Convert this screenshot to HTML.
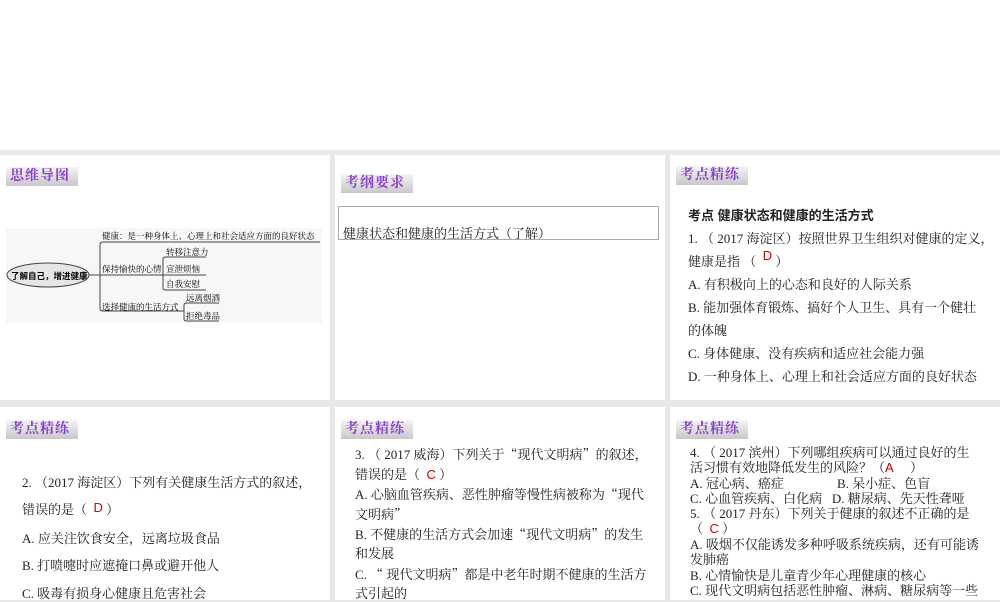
<!DOCTYPE html>
<html><head><meta charset="utf-8"><style>
*{margin:0;padding:0;box-sizing:border-box}
body{width:1000px;height:600px;background:#e8e8e8;position:relative;overflow:hidden;font-family:"Liberation Serif","Noto Serif CJK SC",serif;color:#222}
.top{position:absolute;left:0;top:0;width:1000px;height:150px;background:#fff}
.p{position:absolute;background:#fff}
.h{position:absolute;width:72px;height:19px;background:linear-gradient(#f4f4f4,#c8c8c8);color:#8a3fd0;font-weight:bold;font-size:14px;line-height:19px;padding-left:4px;letter-spacing:1px;font-family:"Liberation Serif","Noto Serif CJK SC",serif}
.t{position:absolute;font-size:13px;white-space:nowrap}
.q{font-family:"Noto Serif CJK SC",serif}
.r{color:#d00000;font-family:"Liberation Sans",sans-serif}
</style></head><body>
<div class="top"></div>
<div class="p" style="left:0;top:155px;width:330px;height:245px"></div>
<div class="p" style="left:335px;top:155px;width:330px;height:245px"></div>
<div class="p" style="left:670px;top:155px;width:330px;height:245px"></div>
<div class="p" style="left:0;top:407px;width:330px;height:193px"></div>
<div class="p" style="left:335px;top:407px;width:330px;height:193px"></div>
<div class="p" style="left:670px;top:407px;width:330px;height:193px"></div>

<div class="h" style="left:6px;top:167px">思维导图</div>
<div class="h" style="left:341px;top:174px">考纲要求</div>
<div class="h" style="left:676px;top:166px">考点精练</div>
<div class="h" style="left:6px;top:420px">考点精练</div>
<div class="h" style="left:341px;top:420px">考点精练</div>
<div class="h" style="left:676px;top:420px">考点精练</div>

<svg style="position:absolute;left:6px;top:228px" width="316" height="95" font-family="Liberation Serif,Noto Serif CJK SC,serif" font-size="8.5">
<rect width="316" height="95" fill="#f7f7f7"/>
<ellipse cx="42" cy="47" rx="41" ry="12" fill="#e6e6e6" stroke="#444"/>
<text x="5" y="51" font-size="8.5" font-weight="bold" font-family="Liberation Sans,Noto Sans CJK SC,sans-serif">了解自己，增进健康</text>
<path d="M83 47H94M94 47V17Q94 14 97 14H314M94 47H160M94 47V81Q94 83 97 83H178" stroke="#444" fill="none"/>
<text x="96" y="11">健康：是一种身体上、心理上和社会适应方面的良好状态</text>
<text x="96" y="44">保持愉快的心情</text>
<path d="M157 47V31Q157 29 160 29H200M157 47H200M157 47V60Q157 62 160 62H200" stroke="#444" fill="none"/>
<text x="160" y="27">转移注意力</text>
<text x="160" y="44">宣泄烦恼</text>
<text x="160" y="59">自我安慰</text>
<text x="96" y="82">选择健康的生活方式</text>
<path d="M178 83V77Q178 75 181 75H213M178 83V91Q178 93 181 93H213" stroke="#444" fill="none"/>
<text x="180" y="73">远离烟酒</text>
<text x="180" y="91">拒绝毒品</text>
</svg>

<div style="position:absolute;left:338px;top:206px;width:321px;height:34px;border:1px solid #aaa"></div>
<div class="t" style="left:343px;top:223px">健康状态和健康的生活方式（了解）</div>

<div class="t" style="left:688px;top:205px;font-weight:bold;font-family:'Liberation Sans','Noto Sans CJK SC',sans-serif">考点 健康状态和健康的生活方式</div>
<div class="t" style="left:688px;top:228px">1. （ 2017 海淀区）按照世界卫生组织对健康的定义，</div>
<div class="t" style="left:688px;top:251px">健康是指 （ &nbsp;<span class="r" style="position:relative;top:-6px">D</span> ）</div>
<div class="t" style="left:688px;top:274px">A. 有积极向上的心态和良好的人际关系</div>
<div class="t" style="left:688px;top:297px">B. 能加强体育锻炼、搞好个人卫生、具有一个健壮</div>
<div class="t" style="left:688px;top:320px">的体魄</div>
<div class="t" style="left:688px;top:343px">C. 身体健康、没有疾病和适应社会能力强</div>
<div class="t" style="left:688px;top:366px">D. 一种身体上、心理上和社会适应方面的良好状态</div>

<div class="t" style="left:22px;top:472px">2. （2017 海淀区）下列有关健康生活方式的叙述，</div>
<div class="t" style="left:22px;top:499px">错误的是（ &nbsp;<span class="r" style="position:relative;top:-2px">D</span> ）</div>
<div class="t" style="left:22px;top:528px">A. 应关注饮食安全，远离垃圾食品</div>
<div class="t" style="left:22px;top:555px">B. 打喷嚏时应遮掩口鼻或避开他人</div>
<div class="t" style="left:22px;top:583px">C. 吸毒有损身心健康且危害社会</div>

<div class="t" style="left:355px;top:444px">3. （ 2017 威海）下列关于<span class="q">“</span>现代文明病<span class="q">”</span>的叙述，</div>
<div class="t" style="left:355px;top:464px">错误的是（ &nbsp;<span class="r">C</span> ）</div>
<div class="t" style="left:355px;top:484px">A. 心脑血管疾病、恶性肿瘤等慢性病被称为<span class="q">“</span>现代</div>
<div class="t" style="left:355px;top:504px">文明病<span class="q">”</span></div>
<div class="t" style="left:355px;top:524px">B. 不健康的生活方式会加速<span class="q">“</span>现代文明病<span class="q">”</span>的发生</div>
<div class="t" style="left:355px;top:543px">和发展</div>
<div class="t" style="left:355px;top:564px">C. <span class="q">“</span> 现代文明病<span class="q">”</span>都是中老年时期不健康的生活方</div>
<div class="t" style="left:355px;top:583px">式引起的</div>

<div class="t" style="left:690px;top:442px">4. （ 2017 滨州）下列哪组疾病可以通过良好的生</div>
<div class="t" style="left:690px;top:457px">活习惯有效地降低发生的风险？（<span class="r">A</span> &nbsp; &nbsp; ）</div>
<div class="t" style="left:690px;top:473px">A. 冠心病、癌症</div><div class="t" style="left:837px;top:473px">B. 呆小症、色盲</div>
<div class="t" style="left:690px;top:488px">C. 心血管疾病、白化病 &nbsp; D. 糖尿病、先天性聋哑</div>
<div class="t" style="left:690px;top:503px">5. （ 2017 丹东）下列关于健康的叙述不正确的是</div>
<div class="t" style="left:690px;top:518px">（ &nbsp;<span class="r">C</span> ）</div>
<div class="t" style="left:690px;top:534px">A. 吸烟不仅能诱发多种呼吸系统疾病，还有可能诱</div>
<div class="t" style="left:690px;top:549px">发肺癌</div>
<div class="t" style="left:690px;top:565px">B. 心情愉快是儿童青少年心理健康的核心</div>
<div class="t" style="left:690px;top:580px">C. 现代文明病包括恶性肿瘤、淋病、糖尿病等一些</div>
</body></html>
